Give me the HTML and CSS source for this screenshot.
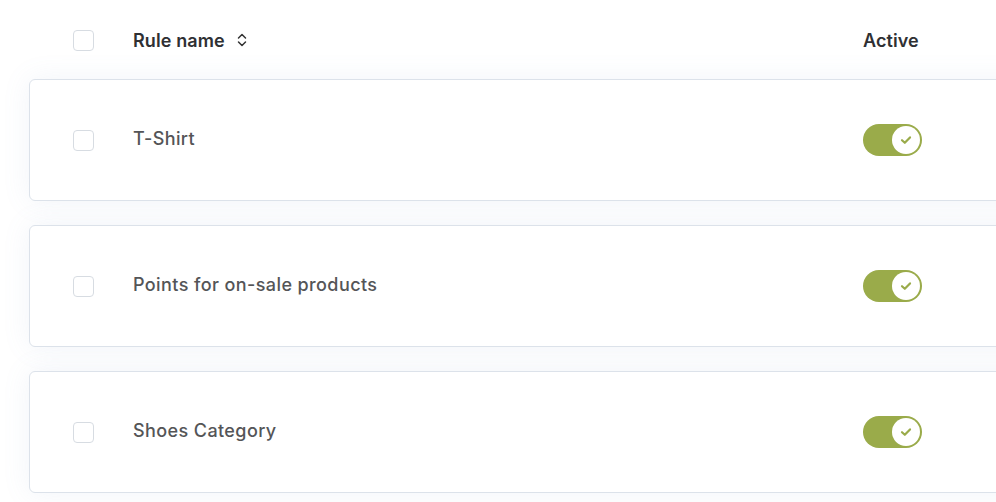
FILE: index.html
```html
<!DOCTYPE html>
<html lang="en">
<head>
<meta charset="utf-8">
<title>Rules</title>
<link rel="stylesheet" href="styles.css">
</head>
<body>
<div class="page">
  <div class="row header">
    <span class="checkbox"></span>
    <span class="col-name">Rule name
      <svg class="sort" width="12" height="14" viewBox="0 0 12 14" aria-hidden="true"><path d="M2.5 5 L6 1.5 L9.5 5 M2.5 9 L6 12.5 L9.5 9" fill="none" stroke="#333" stroke-width="1.5" stroke-linecap="round" stroke-linejoin="round"/></svg>
    </span>
    <span class="col-active">Active</span>
  </div>
  <div class="list">
    <div class="row card">
      <span class="checkbox"></span>
      <span class="col-name name">T-Shirt</span>
      <span class="col-active"><span class="toggle"><span class="knob"><svg width="12" height="10" viewBox="0 0 12 10"><path d="M2 5.2 L4.8 7.8 L10 2.4" fill="none" stroke="#9aab4a" stroke-width="2.2" stroke-linecap="round" stroke-linejoin="round"/></svg></span></span></span>
    </div>
    <div class="row card">
      <span class="checkbox"></span>
      <span class="col-name name">Points for on-sale products</span>
      <span class="col-active"><span class="toggle"><span class="knob"><svg width="12" height="10" viewBox="0 0 12 10"><path d="M2 5.2 L4.8 7.8 L10 2.4" fill="none" stroke="#9aab4a" stroke-width="2.2" stroke-linecap="round" stroke-linejoin="round"/></svg></span></span></span>
    </div>
    <div class="row card">
      <span class="checkbox"></span>
      <span class="col-name name">Shoes Category</span>
      <span class="col-active"><span class="toggle"><span class="knob"><svg width="12" height="10" viewBox="0 0 12 10"><path d="M2 5.2 L4.8 7.8 L10 2.4" fill="none" stroke="#9aab4a" stroke-width="2.2" stroke-linecap="round" stroke-linejoin="round"/></svg></span></span></span>
    </div>
  </div>
</div>
</body>
</html>
```
FILE: styles.css
```css
html, body {
  margin: 0;
  padding: 0;
  background: #ffffff;
  overflow: hidden;
}
body {
  font-family: Inter, "Liberation Sans", Arial, sans-serif;
  width: 996px;
  height: 502px;
}
.page {
  padding-left: 29px;
  width: 1000px;
}
.row {
  display: grid;
  grid-template-columns: 60px 730px auto;
  align-items: center;
  padding-left: 43px;
  box-sizing: border-box;
  border: 1px solid transparent;
}
.header {
  height: 79px;
  padding-top: 1px;
  border-top: 0;
  border-bottom: 0;
  font-weight: 600;
  font-size: 18px;
  letter-spacing: 0.1px;
  color: #2f3033;
}
.col-name {
  display: flex;
  align-items: center;
  gap: 11px;
}
.sort {
  display: block;
}
.list {
  display: flex;
  flex-direction: column;
  gap: 24px;
}
.card {
  height: 122px;
  background: #ffffff;
  border: 1px solid #dce2ea;
  border-radius: 6px;
  box-shadow: 0 0 28px rgba(120, 150, 200, 0.10);
}
.checkbox {
  display: block;
  width: 21px;
  height: 21px;
  box-sizing: border-box;
  border: 1px solid #d7dce2;
  border-radius: 4px;
  background: #fff;
}
.name {
  font-size: 18px;
  font-weight: 500;
  letter-spacing: 0.4px;
  color: #545557;
  padding-bottom: 3px;
}
.toggle {
  display: flex;
  align-items: center;
  justify-content: flex-end;
  width: 59px;
  height: 32px;
  box-sizing: border-box;
  padding: 2px;
  border-radius: 16px;
  background: #9aab4a;
}
.knob {
  width: 28px;
  height: 28px;
  border-radius: 50%;
  background: #fff;
  display: flex;
  align-items: center;
  justify-content: center;
}
.knob svg {
  display: block;
}
```
